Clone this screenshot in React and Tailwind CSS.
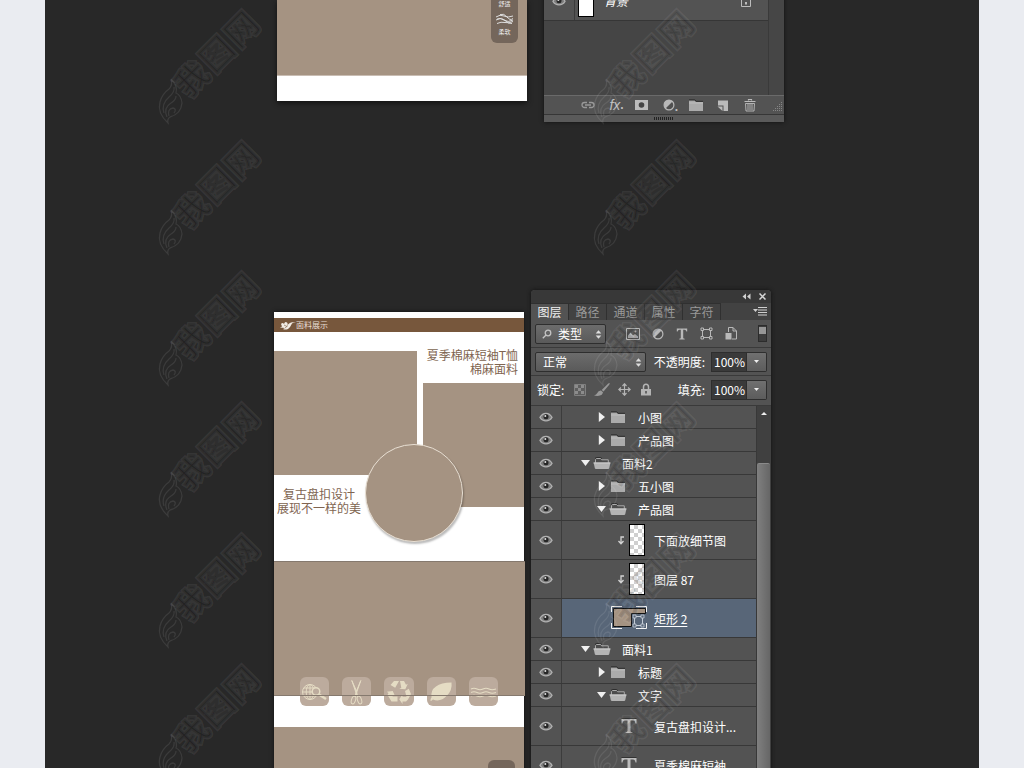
import { useState } from "react";
import clsx from "clsx";

const tabs = ["图层", "路径", "通道", "属性", "字符"];

const layers = [
  { id: 1, kind: "group", name: "小图", depth: 2, open: false },
  { id: 2, kind: "group", name: "产品图", depth: 2, open: false },
  { id: 3, kind: "group", name: "面料2", depth: 1, open: true },
  { id: 4, kind: "group", name: "五小图", depth: 2, open: false },
  { id: 5, kind: "group", name: "产品图", depth: 2, open: true },
  { id: 6, kind: "pixel", name: "下面放细节图" },
  { id: 7, kind: "pixel", name: "图层 87" },
  { id: 8, kind: "shape", name: "矩形 2" },
  { id: 9, kind: "group", name: "面料1", depth: 1, open: true },
  { id: 10, kind: "group", name: "标题", depth: 2, open: false },
  { id: 11, kind: "group", name: "文字", depth: 2, open: true },
  { id: 12, kind: "text", name: "复古盘扣设计..." },
  { id: 13, kind: "text", name: "夏季棉麻短袖" },
];

function EyeIcon() {
  return (
    <svg width="14" height="10" viewBox="0 0 14 10" fill="none">
      <path d="M1 5.300C2.600 2.400 4.700 1.300 7 1.300s4.400 1.100 6 4C11.400 7.900 9.300 8.800 7 8.800S2.600 7.900 1 5.300Z" fill="#7c7c7c" stroke="#b2b2b2" strokeWidth="1.300" />
      <circle cx="7" cy="4.800" r="2.500" fill="#262626" />
      <circle cx="6.300" cy="4" r="1" fill="#dedede" />
    </svg>
  );
}

function FolderIcon({ open }) {
  if (open) {
    return (
      <svg width="18" height="13" viewBox="0 0 18 13" className="-mx-px block">
        <path d="M2.500 6V2.500l1-1h4l1.200 1.300h6.600V6" fill="#4c4c4c" stroke="#a8a8a8" />
        <path d="M2 1.500 3.300.5h4.400L9 1.800" stroke="#2e2e2e" fill="none" />
        <path d="M.5 5.500h17l-1.300 5.800q-.2.700-1 .7H2.900q-.8 0-1-.7Z" fill="#b4b4b4" />
        <path d="M.7 6h16.600" stroke="#cfcfcf" />
      </svg>
    );
  }
  return (
    <svg width="16" height="13" viewBox="0 0 16 13" className="block">
      <path d="M1 1.500h5.500L8 3h7v9H1Z" fill="#ababab" />
      <path d="M1 .8h5.800l1.400 1.500H15" stroke="#303030" fill="none" />
      <path d="M1 4h14" stroke="#bdbdbd" />
    </svg>
  );
}

function Disclosure({ open }) {
  return (
    <svg width="12" height="10" viewBox="0 0 12 10" fill="#f0f0f0">
      {open ? <path d="M1 2h9L5.500 8Z" /> : <path d="M2.800 0v10L9 5Z" />}
    </svg>
  );
}

function AdjustIcon() {
  return (
    <svg width="12" height="12" viewBox="0 0 12 12">
      <circle cx="6" cy="6" r="4.900" fill="#505050" stroke="#b8b8b8" strokeWidth="1.200" />
      <path d="M9.500 2.500A4.950 4.950 0 0 0 2.500 9.500Z" fill="#b8b8b8" />
    </svg>
  );
}

function UpDown() {
  return (
    <svg width="7" height="9" viewBox="0 0 7 9" fill="#dedede" className="pointer-events-none absolute right-1 top-[6px]">
      <path d="M.7 3.500 3.500.3l2.800 3.200ZM.7 5.500l2.800 3.200 2.800-3.200Z" />
    </svg>
  );
}

function VectorIcon() {
  return (
    <svg width="13" height="13" viewBox="0 0 13 13" fill="none" stroke="#b8b8b8">
      <path d="M2.500 3.500v6M10.500 3.500v6M3.500 2.500h6M3.500 10.500h6" />
      <path d="M1 1h2.500v2.500H1ZM9.500 1H12v2.500H9.500ZM1 9.500h2.500V12H1ZM9.500 9.500H12V12H9.500Z" />
    </svg>
  );
}

function Clip() {
  return (
    <svg width="8" height="9" viewBox="0 0 8 9" className="mr-1" fill="none" stroke="#d4d4d4" strokeWidth="1.300">
      <path d="M7 1H4v6M1.500 5 4 7.700 6.500 5" />
    </svg>
  );
}

function LayerThumb({ kind }) {
  if (kind === "pixel") {
    return (
      <>
        <Clip />
        <span className="h-8 w-4 border border-black bg-white bg-[conic-gradient(#cfcfcf_25%,white_0_50%,#cfcfcf_0_75%,white_0)] bg-size-[8px_8px]" />
      </>
    );
  }
  if (kind === "shape") {
    return (
      <svg width="36" height="24" viewBox="0 0 36 24">
        <path d="M2.500 2.500h32v5h-14v13h-18Z" fill="#a59382" stroke="#111" />
        <path d="M.5 6V.5H11M25 .5h10.500V6M.5 17v5.500H11M25 22.500h10.500V17" fill="none" stroke="#f4f4f4" />
        <path d="M23.500 11v8M31.500 11v8M24 10.500h7M24 19.500h7" stroke="#c4ccd6" fill="none" />
        <path d="M22 9h3v3h-3ZM30 9h3v3h-3ZM22 18h3v3h-3ZM30 18h3v3h-3Z" fill="#586678" stroke="#c4ccd6" strokeWidth=".8" />
      </svg>
    );
  }
  return (
    <svg width="16" height="16" viewBox="0 0 16 16">
      <path d="M.5 1h15v4.500h-1q-.4-3-2.500-3H9.500v10.700q0 1 2 1.200V15h-7v-.6q2-.2 2-1.200V2.500H4q-2.100 0-2.500 3h-1Z" fill="#bcbcbc" />
      <path d="M.5.500h15" stroke="#333" />
    </svg>
  );
}

function Layer({ layer, selected, onSelect }) {
  const group = layer.kind === "group";
  return (
    <li
      onClick={onSelect}
      className={clsx("flex border-b border-[#383838]", group ? "h-[23px]" : "h-[39px]")}
    >
      <button aria-label="显示图层" className="flex w-[31px] items-center justify-center border-r border-[#3c3c3c]">
        <EyeIcon />
      </button>
      <div
        className={clsx(
          "flex min-w-0 flex-1 items-center",
          selected && "bg-[#586678]",
          group && layer.depth === 1 && "pl-[18px]",
          group && layer.depth === 2 && "pl-[34px]",
          layer.kind === "pixel" && "pl-[55px]",
          layer.kind === "shape" && "pl-[49px]",
          layer.kind === "text" && "pl-[59px]"
        )}
      >
        {group ? (
          <>
            <button aria-label="展开组" className="w-3">
              <Disclosure open={layer.open} />
            </button>
            <span className="ml-0.5">
              <FolderIcon open={layer.open} />
            </span>
          </>
        ) : (
          <LayerThumb kind={layer.kind} />
        )}
        <span
          className={clsx(
            "whitespace-nowrap pt-0.5",
            group && "ml-3",
            layer.kind === "pixel" && "ml-[9px]",
            layer.kind === "shape" && "ml-[7px] underline underline-offset-2",
            layer.kind === "text" && "ml-[17px]"
          )}
        >
          {layer.name}
        </span>
      </div>
    </li>
  );
}

function PercentField({ id, label }) {
  return (
    <div className="ml-auto flex items-center">
      <label htmlFor={id} className="mr-[6px] whitespace-nowrap">{label}:</label>
      <input id={id} defaultValue="100%" className="h-5 w-9 border border-[#2e2e2e] bg-[#3a3a3a] pl-0.5" />
      <button
        aria-label={label + "滑块"}
        className="flex h-5 w-5 items-center justify-center rounded-r-xs border border-l-0 border-[#2e2e2e] bg-linear-to-b from-[#707070] to-[#5c5c5c]"
      >
        <svg width="5" height="3" viewBox="0 0 5 3" fill="#eee"><path d="M0 0h5L2.500 3Z" /></svg>
      </button>
    </div>
  );
}

function LayersPanel() {
  const [tab, setTab] = useState("图层");
  const [selected, setSelected] = useState(8);

  return (
    <section className="mb-[-20px] w-[240px] rounded-t-sm bg-[#535353] text-xs leading-4 text-white shadow-[0_0_4px_#111]">
      <header className="flex h-[13px] items-center justify-end gap-2 rounded-t-sm bg-[#383838] pr-[5px]">
        <button aria-label="折叠">
          <svg width="9" height="7" viewBox="0 0 9 7" fill="#d0d0d0" className="block"><path d="M4 .5v6L.5 3.500ZM8.500.5v6L5 3.500Z" /></svg>
        </button>
        <button aria-label="关闭">
          <svg width="7" height="7" viewBox="0 0 7 7" stroke="#d8d8d8" strokeWidth="1.500" className="block"><path d="M.5.500l6 6M6.500.5l-6 6" /></svg>
        </button>
      </header>

      <nav className="flex h-[17px] bg-[#424242]">
        {tabs.map((name) => (
          <button
            key={name}
            onClick={() => setTab(name)}
            className={clsx(
              "w-[38px] border-r border-t border-[#303030] leading-4",
              tab === name ? "bg-[#535353] text-[#f0f0f0]" : "text-[#999]"
            )}
          >
            {name}
          </button>
        ))}
        <button aria-label="面板菜单" className="ml-auto mr-1">
          <svg width="14" height="9" viewBox="0 0 14 9" fill="#cfcfcf"><path d="M0 2h5L2.500 5ZM5 0h9v1H5ZM5 2.500h9v1H5ZM5 5h9v1H5ZM5 7.500h9v1H5Z" /></svg>
        </button>
      </nav>

      <div className="flex h-7 items-center border-b border-[#3a3a3a] pl-1 pr-1">
        <div className="relative w-[71px]">
          <svg width="10" height="10" viewBox="0 0 10 10" fill="none" stroke="#c4c4c4" strokeWidth="1.300" className="pointer-events-none absolute left-[7px] top-[5px]">
            <circle cx="6" cy="4" r="2.800" />
            <path d="M4 6 .8 9.300" />
          </svg>
          <select aria-label="滤镜类型" className="h-5 w-full appearance-none rounded-xs border border-[#2e2e2e] bg-linear-to-b from-[#6c6c6c] to-[#5a5a5a] pl-[22px] leading-4">
            <option>类型</option>
          </select>
          <UpDown />
        </div>
        <div className="ml-5 flex items-center gap-3">
          <button aria-label="像素图层">
            <svg width="14" height="12" viewBox="0 0 14 12" className="block">
              <path d="M.5.500h13v11H.5Z" fill="#505050" stroke="#b4b4b4" />
              <path d="M2 10V7.500l2.500-3 2.500 3 2-1.500 3 2.500V10Z" fill="#b4b4b4" />
              <circle cx="9.500" cy="3.500" r="1" fill="#b4b4b4" />
            </svg>
          </button>
          <button aria-label="调整图层" className="[&>svg]:block"><AdjustIcon /></button>
          <button aria-label="文字图层">
            <svg width="12" height="12" viewBox="0 0 12 12" fill="#b8b8b8" className="block"><path d="M.8.500h10.400v3h-.8q-.3-1.700-2-1.700H7.200v8q0 .9 1.500 1v.7H3.300v-.7q1.500-.1 1.500-1v-8H3.600q-1.700 0-2 1.700H.8Z" /></svg>
          </button>
          <button aria-label="形状图层" className="[&>svg]:block"><VectorIcon /></button>
          <button aria-label="智能对象">
            <svg width="12" height="13" viewBox="0 0 12 13" fill="none" className="block">
              <path d="M3.500 5V.5H8L11.500 4v8H7M8 .5V4h3.500" stroke="#b8b8b8" />
              <path d="M.5 6h6v6.500h-6Z" fill="#b8b8b8" />
            </svg>
          </button>
        </div>
        <button aria-label="打开或关闭图层过滤" className="ml-auto h-[17px] w-[9px] border border-[#2c2c2c] bg-[#3c3c3c]">
          <span className="-mt-[7px] block h-[7px] bg-[#969696]" />
        </button>
      </div>

      <div className="flex h-7 items-center border-b border-[#3a3a3a] px-1">
        <div className="relative w-[111px]">
          <select aria-label="混合模式" className="h-5 w-full appearance-none rounded-xs border border-[#2e2e2e] bg-linear-to-b from-[#6c6c6c] to-[#5a5a5a] pl-[7px] leading-4">
            <option>正常</option>
          </select>
          <UpDown />
        </div>
        <PercentField id="opacity" label="不透明度" />
      </div>

      <div className="flex h-[30px] items-center border-b border-[#3a3a3a] pb-0.5 pl-[6px] pr-1">
        <span>锁定:</span>
        <div className="ml-[10px] flex items-center gap-2 [&_svg]:block">
          <button aria-label="锁定透明像素">
            <svg width="12" height="12" viewBox="0 0 12 12">
              <path d="M.5.500h11v11H.5Z" fill="#5f5f5f" stroke="#808080" />
              <path d="M1 1h3v3H1ZM7 1h3v3H7ZM4 4h3v3H4ZM1 7h3v3H1ZM7 7h3v3H7Z" fill="#8c8c8c" />
            </svg>
          </button>
          <button aria-label="锁定图像像素">
            <svg width="16" height="14" viewBox="0 0 16 14" fill="#999">
              <path d="M15.500 0Q16 .7 15 2L9.500 8.500 7.700 7 14 .8q1-.9 1.500-.8ZM7 7.500 9 9.300q-.5 3-4 3.500-2.500.3-5-.3 2.500-.8 3.300-2.500Q4.300 7.300 7 7.500Z" />
            </svg>
          </button>
          <button aria-label="锁定位置">
            <svg width="13" height="13" viewBox="0 0 13 13" fill="none" stroke="#b4b4b4" strokeWidth="1.200">
              <path d="M6.500 1v11M1 6.500h11M4.500 3l2-2.200 2 2.200M4.500 10l2 2.200 2-2.200M3 4.500.8 6.500 3 8.500M10 4.500l2.200 2-2.200 2" />
            </svg>
          </button>
          <button aria-label="锁定全部" className="ml-0.5">
            <svg width="10" height="13" viewBox="0 0 10 13">
              <path d="M2.500 6V4q0-2.800 2.500-2.800T7.500 4v2" stroke="#b4b4b4" strokeWidth="1.500" fill="none" />
              <path d="M0 6h10v6.500H0Z" fill="#b4b4b4" />
              <path d="M4.300 8h1.400v2.500H4.300Z" fill="#444" />
            </svg>
          </button>
        </div>
        <PercentField id="fill" label="填充" />
      </div>

      <div className="flex">
        <ul className="min-w-0 flex-1 border-r border-[#383838]">
          {layers.map((layer) => (
            <Layer
              key={layer.id}
              layer={layer}
              selected={selected === layer.id}
              onSelect={() => setSelected(layer.id)}
            />
          ))}
        </ul>
        <div className="flex w-[14px] flex-col bg-[#404040]">
          <button aria-label="向上滚动" className="flex h-[57px] justify-center pt-[6px]">
            <svg width="6" height="3" viewBox="0 0 6 3" fill="#eee"><path d="M0 3h6L3 0Z" /></svg>
          </button>
          <div className="mr-px flex-1 rounded-t-xs border-t border-[#8a8a8a] bg-linear-to-r from-[#808080] to-[#666]" />
        </div>
      </div>
    </section>
  );
}

function BackgroundPanel() {
  return (
    <section className="-mt-[19px] w-[240px] bg-[#4a4a4a] text-xs leading-4 text-white shadow-[0_0_4px_#111]">
      <div className="flex">
        <div className="h-[114px] min-w-0 flex-1 border-r border-[#3a3a3a] bg-[#454545]">
          <div className="flex h-10 items-center border-b border-[#363636] bg-[#535353]">
            <button aria-label="显示图层" className="flex h-full w-[31px] items-center justify-center border-r border-[#3c3c3c]">
              <EyeIcon />
            </button>
            <span className="ml-[3px] h-8 w-4 border border-black bg-white" />
            <span className="ml-[10px] italic">背景</span>
            <svg width="10" height="12" viewBox="0 0 10 12" className="ml-auto mr-[17px]" fill="none" stroke="#bdbdbd">
              <path d="M2.500 4.500V3q0-2 2.500-2t2.500 2v1.500M.5 4.500h9v7h-9Z" />
              <path d="M4 7h2v2.500H4Z" fill="#bdbdbd" stroke="none" />
            </svg>
          </div>
        </div>
        <div className="w-[15px] bg-[#464646]" />
      </div>
      <div className="flex h-5 items-center border-y border-t-[#6a6a6a] border-b-[#363636] bg-[#535353] pl-[30px] [&>button]:flex [&>button]:h-full [&>button]:w-[27px] [&>button]:items-center [&>button]:justify-center">
        <button aria-label="链接图层">
          <svg width="14" height="8" viewBox="0 0 14 8" fill="none" stroke="#989898" strokeWidth="1.300">
            <path d="M6 1.500H3.500a2.500 2.500 0 0 0 0 5H6M8 1.500h2.500a2.500 2.500 0 0 1 0 5H8M4 4h6" />
          </svg>
        </button>
        <button aria-label="图层样式" className="pl-1 font-['Liberation_Sans'] text-sm italic text-[#c0c0c0]">
          fx<span className="text-xs font-bold not-italic">.</span>
        </button>
        <button aria-label="图层蒙版">
          <svg width="13" height="10" viewBox="0 0 13 10"><path d="M0 0h13v10H0Z" fill="#bcbcbc" /><circle cx="6.500" cy="5" r="2.800" fill="#444" /></svg>
        </button>
        <button aria-label="新建调整图层" className="pl-1">
          <AdjustIcon />
          <span className="pt-1 font-['Liberation_Sans'] text-xs font-bold text-[#c0c0c0]">.</span>
        </button>
        <button aria-label="新建组"><FolderIcon /></button>
        <button aria-label="新建图层">
          <svg width="11" height="11" viewBox="0 0 11 11" fill="#bcbcbc"><path d="M1 .5h10V11H6.500V5.500H1Z" /><path d="M.5 6.500h5V11Z" /></svg>
        </button>
        <button aria-label="删除图层">
          <svg width="12" height="13" viewBox="0 0 12 13" fill="none" stroke="#bcbcbc">
            <path d="M4.500 1.500v-1h3v1M.5 2.500h11" strokeWidth="1.200" />
            <path d="M1.500 4.500l.5 7.500h8l.5-7.500ZM4 5v6M6 5v6M8 5v6" strokeWidth=".9" />
          </svg>
        </button>
        <svg width="10" height="10" viewBox="0 0 10 10" fill="#858585" className="ml-auto mr-px mt-1">
          <path d="M8 0h1v1H8ZM6 2h1v1H6ZM8 2h1v1H8ZM4 4h1v1H4ZM6 4h1v1H6ZM8 4h1v1H8ZM2 6h1v1H2ZM4 6h1v1H4ZM6 6h1v1H6ZM8 6h1v1H8ZM0 8h1v1H0ZM2 8h1v1H2ZM4 8h1v1H4ZM6 8h1v1H6ZM8 8h1v1H8Z" />
        </svg>
      </div>
      <div className="flex h-[7px] items-center justify-center bg-[#5a5a5a]">
        <span className="h-[3px] w-5 bg-[repeating-linear-gradient(90deg,#222_0_1px,transparent_1px_2px)]" />
      </div>
    </section>
  );
}

function CreamIcons() {
  return (
    <div className="absolute left-[26px] top-[365px] flex gap-[13px] [&>svg]:rounded-md [&>svg]:bg-[#bcab9d]">
      <svg width="29" height="29" viewBox="0 0 29 29" fill="none" stroke="#e5dcc4">
        <circle cx="10" cy="15" r="7.500" />
        <path d="M10 7.500v15M2.500 15h15M4 11h12M4 19h12" />
        <ellipse cx="10" cy="15" rx="3.800" ry="7.500" />
        <circle cx="16" cy="14.500" r="3.800" fill="#bcab9d" strokeWidth="1.500" />
        <path d="m19 17.500 7 4.500" strokeWidth="2.500" />
      </svg>
      <svg width="29" height="29" viewBox="0 0 29 29" fill="none" stroke="#e5dcc4">
        <path d="M9.800 3.500 15.500 20 14.500 14ZM18.800 3.500 13 20l1.500-6Z" fill="#e5dcc4" />
        <ellipse cx="11.500" cy="23" rx="2" ry="4" transform="rotate(18 11.500 23)" />
        <ellipse cx="17.500" cy="23" rx="2" ry="4" transform="rotate(-18 17.500 23)" />
      </svg>
      <svg width="30" height="29" viewBox="0 0 30 29" fill="#e5dcc4">
        <path d="M10 4h5l-3.800 6.800L6.500 8ZM16 4h4l2 3.800 1.800-1-2.500 5.400-6-.5 2-1Z" />
        <path d="m21 14 3.800-2.300L27 17l-3 5.500-2 2h-3.500V27l-3.300-4.800 3.300-4.700v2.300h4Z" />
        <path d="M13.500 19.500v5H7.500L3.500 18l1-2-1.800-1.200 6-.8 2.300 5-1.700-1-.8 1.500Z" />
      </svg>
      <svg width="29" height="29" viewBox="0 0 29 29" fill="#e5dcc4">
        <path d="M24.500 5.500Q25.500 13 20 18.500 13.500 25.500 6 22.500L4 24l-.6-.5Q3.500 21.500 4.500 20.500 3.500 13 9 9.500q5-4 15.500-4Z" />
      </svg>
      <svg width="29" height="29" viewBox="0 0 29 29" fill="none" stroke="#e5dcc4" strokeWidth="1.200">
        <path d="M2 12q3-1.500 6 0t6 0 6 0 7 0M2 15.500q3-1.500 6 0t6 0 6 0 7 0M2 19q3-1.500 6 0t6 0 6 0 7 0" />
      </svg>
    </div>
  );
}

function TopArtboard() {
  return (
    <article className="relative w-[250px] bg-white shadow-[0_2px_5px_#111]">
      <div className="h-[76px] border-b border-[#c9bdb3] bg-[#a59382]" />
      <div className="h-[25px]" />
      <div className="absolute right-[9px] top-0 flex h-[43px] w-[27px] flex-col items-center rounded-b-md bg-[#74665b] text-[6px] leading-[7px] text-[#eee]">
        <span>舒适</span>
        <svg width="20" height="12" viewBox="0 0 20 12" fill="none" stroke="#ddd" className="mb-[3px] mt-[6px] shrink-0">
          <path d="M1 4q4-3 8-1t9 0M1 7q4-3 8 0t9 0M2 10.500q4-2 8-1t8-1M5 1.500q4-1.500 7 2.500t6 1.500M2 6q5-2 8 1.500t7 3" />
        </svg>
        <span>柔软</span>
      </div>
    </article>
  );
}

function FabricArtboard() {
  return (
    <article className="relative mt-[22px] w-[250px] bg-white pt-[6px] shadow-[0_0_4px_#111]">
      <h2 className="flex h-[14px] items-center bg-[#77573c] pl-[6px] text-[8px] leading-3 text-[#e6ddd4]">
        <svg width="16" height="9" viewBox="0 0 16 9" fill="#f1ebe4" className="shrink-0">
          <path d="M1 3q1.500-2 3 0 1-3 3-1.500 1 .8.500 2.500Q9 2 11 1.500q2-.8 5-.5-2.500.2-4 1.500-1.500 3.500-4 5.500Q5 9 3 8l2-1-5-.5 2-1Z" />
          <path d="m4 4 3 1.500M5 7l3-2.500" stroke="#77573c" strokeWidth=".6" />
        </svg>
        面料展示
      </h2>
      <div className="relative flex h-[229px] gap-[6px] font-['Liberation_Sans','Noto_Sans_CJK_SC',sans-serif] text-xs leading-[14px] text-[#806450]">
        <div className="w-[143px] shrink-0 pt-[19px]">
          <div className="h-[124px] bg-[#a59382]" />
          <p className="w-[90px] pt-[13px] text-center">
            复古盘扣设计
            <br />
            展现不一样的美
          </p>
        </div>
        <div className="min-w-0 flex-1">
          <p className="-ml-3 h-[51px] whitespace-nowrap pr-[6px] pt-[17px] text-right">
            夏季棉麻短袖T恤
            <br />
            棉麻面料
          </p>
          <div className="h-[124px] bg-[#a59382]" />
        </div>
        <div className="absolute left-[91px] top-[112px] size-[98px] rounded-full border border-[#e9e0d4] bg-[#a59382] shadow-[1px_2px_2px_#0004]" />
      </div>
      <div className="relative -mr-px h-[135px] border-t border-[#85796e] bg-[#a59382]" />
      <div className="h-[31px]" />
      <div className="h-[60px] bg-[#a59382]" />
      <CreamIcons />
      <div className="absolute left-0 top-[383px] h-px w-full bg-[#85796e]" />
      <div className="absolute right-[9px] top-[448px] h-8 w-[27px] rounded-t-md bg-[#74665b]" />
    </article>
  );
}

function Watermark() {
  return (
    <svg width="110" height="131" viewBox="0 0 110 131" className="block shrink-0 overflow-visible">
      <g
        transform="translate(62 51) rotate(-45)"
        textAnchor="middle"
        fontSize="33"
        fontWeight="700"
        fill="#000"
        fillOpacity=".14"
        stroke="#fff"
        strokeOpacity=".07"
        strokeWidth="3"
        paintOrder="stroke"
      >
        <text x="-35" y="12">我</text>
        <text x="0" y="12">图</text>
        <text x="35" y="12">网</text>
      </g>
      <g fill="none" stroke="#fff" strokeOpacity=".09" strokeWidth="1.300">
        <path d="M13 120Q2 110 5 99q2-8 9-13 4-4 2-10 7 7 5 14 5 2 6 10-1 11-12 14-3 2-2 6Z" />
        <path d="M9 110q-3-9 5-16 6-5 5-10M12 114q-4-9 4-14 5-3 5-7M14 113q-2-7 4-8 4 1 1 5" />
      </g>
    </svg>
  );
}

export default function App() {
  return (
    <div className="h-screen overflow-hidden bg-[#eaecf1] px-[45px] font-['Noto_Sans_CJK_SC',sans-serif]">
      <main className="relative h-full overflow-hidden bg-[#282828]">
        <div className="flex items-start justify-center gap-[17px] pl-[37px]">
          <TopArtboard />
          <BackgroundPanel />
        </div>
        <div className="mt-[168px] flex items-start justify-center gap-[7px] pl-[21px]">
          <FabricArtboard />
          <LayersPanel />
        </div>

        <div className="pointer-events-none absolute left-[110px] top-[3px] flex flex-col">
          {[0, 1, 2, 3, 4, 5].map((n) => <Watermark key={n} />)}
        </div>
        <div className="pointer-events-none absolute left-[545px] top-[3px] flex flex-col">
          {[0, 1, 2, 3, 4, 5].map((n) => <Watermark key={n} />)}
        </div>
      </main>
    </div>
  );
}
